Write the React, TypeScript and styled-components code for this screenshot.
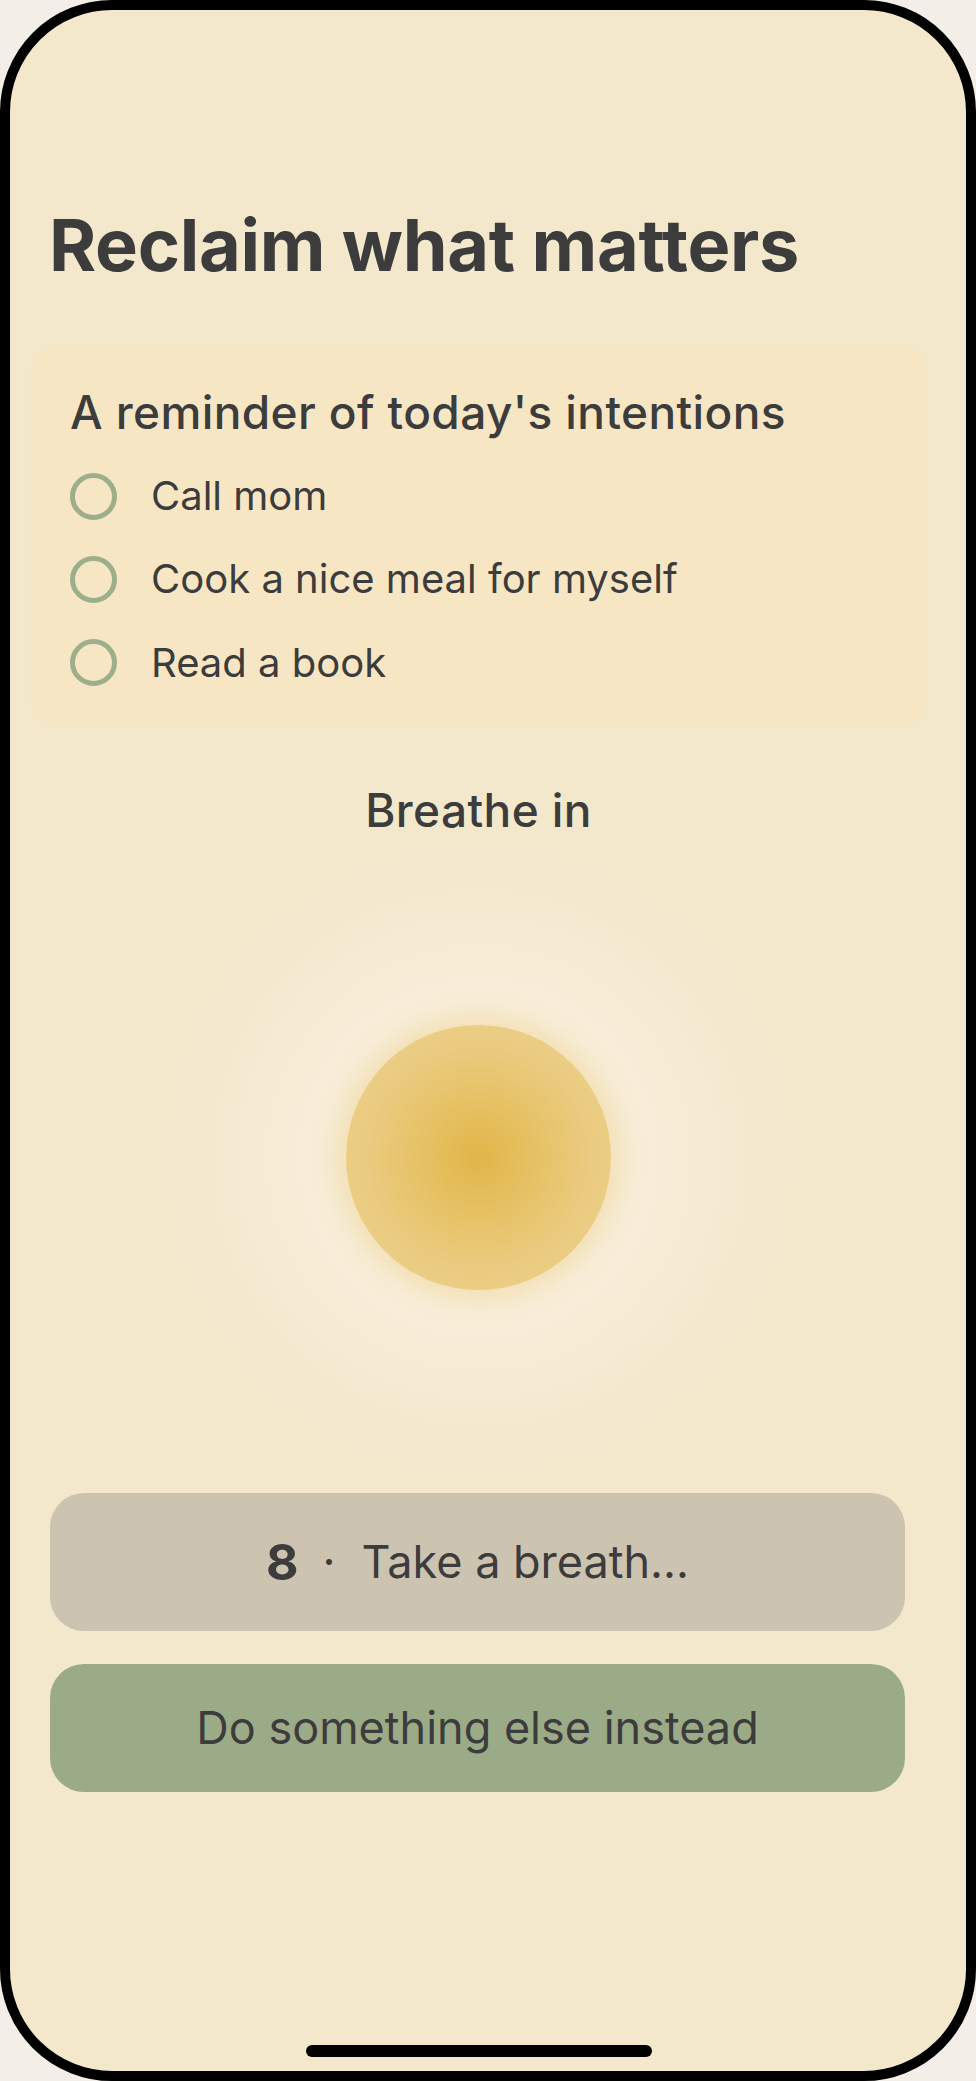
import React from "react";
import styled, { createGlobalStyle } from "styled-components";

const Global = createGlobalStyle`
  html, body { margin: 0; padding: 0; background: #f3efe8; }
  body { font-family: Inter, "Noto Sans", sans-serif; color: #3c3c3c; }
  * { box-sizing: border-box; }
`;

const Phone = styled.div`
  width: 976px;
  height: 2081px;
  border: 10px solid #000;
  border-radius: 112px;
  background: #f3e8cc;
  overflow: hidden;
  display: flex;
  flex-direction: column;
  padding: 192px 40px 14px 21px;
`;

const Title = styled.h1`
  margin: 0 0 57px 18px;
  font-size: 72px;
  line-height: 1.2;
  font-weight: 700;
  letter-spacing: -0.3px;
  color: #3c3c3c;
`;

const Card = styled.section`
  background: #f7e6c3;
  border-radius: 26px;
  padding: 40px 40px 41px 39px;
  display: flex;
  flex-direction: column;
`;

const CardHeading = styled.h2`
  margin: 0 0 32px;
  font-size: 46px;
  line-height: 1.2;
  font-weight: 500;
  letter-spacing: 0.4px;
  color: #3c3c3c;
`;

const List = styled.ul`
  list-style: none;
  margin: 0;
  padding: 0;
  display: flex;
  flex-direction: column;
  gap: 36.3px;
`;

const Item = styled.li`
  display: flex;
  align-items: center;
  gap: 34px;
  height: 47px;
  font-size: 40px;
  line-height: 1.2;
  color: #3c3c3c;
`;

const Check = styled.span`
  width: 47px;
  height: 47px;
  flex: none;
  border-radius: 50%;
  border: 5px solid #9daf8a;
`;

const Prompt = styled.div`
  margin-top: 56px;
  text-align: center;
  font-size: 46px;
  line-height: 1.2;
  font-weight: 500;
  letter-spacing: 0.4px;
  color: #3c3c3c;
`;

const Stage = styled.div`
  height: 639px;
  display: flex;
  align-items: center;
  justify-content: center;
`;

const Halo = styled.div`
  width: 620px;
  height: 620px;
  flex: none;
  border-radius: 50%;
  display: flex;
  align-items: center;
  justify-content: center;
  background: radial-gradient(
    circle,
    rgba(249, 240, 222, 1) 0%,
    rgba(248, 238, 218, 0.85) 40%,
    rgba(246, 235, 212, 0.45) 60%,
    rgba(244, 233, 207, 0.15) 75%,
    rgba(243, 232, 204, 0) 100%
  );
`;

const Orb = styled.div`
  width: 265px;
  height: 265px;
  border-radius: 50%;
  background: radial-gradient(
    circle,
    #e1b548 0%,
    #e6c164 30%,
    #eacb80 60%,
    #ecd28e 100%
  );
  box-shadow: 0 0 28px 6px rgba(234, 200, 110, 0.45);
`;

const Actions = styled.div`
  margin: 16px 21px 0 19px;
  display: flex;
  flex-direction: column;
  gap: 33px;
`;

const ActionButton = styled.button<{ $tone: "muted" | "green"; $h: number }>`
  height: ${(p) => p.$h}px;
  border: none;
  border-radius: 34px;
  background: ${(p) => (p.$tone === "muted" ? "#ccc3b0" : "#9cab87")};
  display: flex;
  align-items: center;
  justify-content: center;
  font-family: Inter, "Noto Sans", sans-serif;
  font-size: 45px;
  line-height: 1.2;
  font-weight: 400;
  color: #3c3c3c;
  padding: 0;
`;

const Count = styled.span`
  font-size: 50px;
  font-weight: 700;
`;

const Dot = styled.span`
  margin: 0 26px 0 24px;
`;

const HomeBar = styled.div`
  margin: auto auto 0;
  width: 346px;
  height: 12px;
  border-radius: 6px;
  background: #000;
`;

export default function App() {
  const intentions = ["Call mom", "Cook a nice meal for myself", "Read a book"];
  return (
    <>
      <Global />
      <Phone>
        <Title>Reclaim what matters</Title>
        <Card>
          <CardHeading>A reminder of today's intentions</CardHeading>
          <List>
            {intentions.map((t) => (
              <Item key={t}>
                <Check />
                {t}
              </Item>
            ))}
          </List>
        </Card>
        <Prompt>Breathe in</Prompt>
        <Stage>
          <Halo>
            <Orb />
          </Halo>
        </Stage>
        <Actions>
          <ActionButton $tone="muted" $h={138}>
            <Count>8</Count>
            <Dot>·</Dot>
            Take a breath...
          </ActionButton>
          <ActionButton $tone="green" $h={128}>
            Do something else instead
          </ActionButton>
        </Actions>
        <HomeBar />
      </Phone>
    </>
  );
}
